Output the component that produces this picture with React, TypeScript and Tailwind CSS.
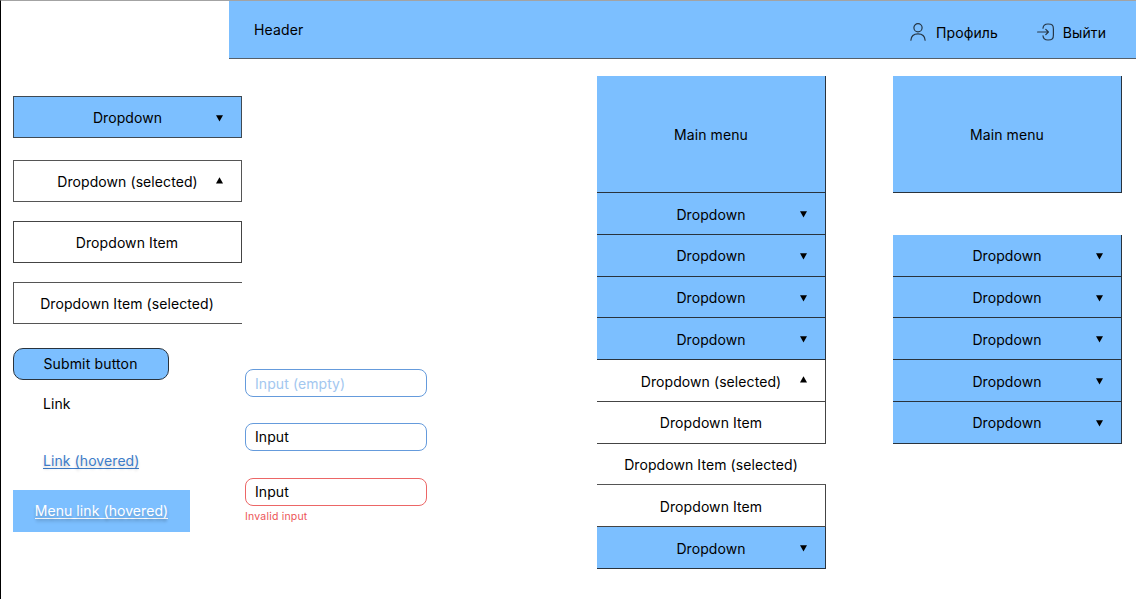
import React from "react";

function Arrow({ up = false }: { up?: boolean }) {
  return (
    <svg
      className={up ? "absolute right-[18px] top-[16px]" : "absolute right-[18px] top-[18px]"}
      width="7"
      height="7"
      viewBox="0 0 7 7"
    >
      {up ? <path d="M3.5 0.3 7 6.4H0Z" /> : <path d="M0 0.3H7L3.5 6.4Z" />}
    </svg>
  );
}

type RowProps = { label: string; arrow?: "up" | "down"; className?: string };

function Row({ label, arrow, className = "" }: RowProps) {
  return (
    <div className={`relative flex shrink-0 items-center justify-center ${className}`}>
      <span className="whitespace-nowrap">{label}</span>
      {arrow && <Arrow up={arrow === "up"} />}
    </div>
  );
}

const menuRow = "h-[41.77px] border-b border-r border-[#29333d] bg-[#7cbfff] pt-[1.5px]";
const plainRow = "h-[41.77px] border-b border-r border-[#444] pt-[1.5px]";
const gapRow = "h-[41.77px] border-b border-[#555] pr-px pt-[1.5px]";

function MainMenu() {
  return (
    <div className="flex h-[117px] items-center justify-center border-b border-r border-[#29333d] bg-[#7cbfff] pt-px">
      Main menu
    </div>
  );
}

function UserIcon() {
  return (
    <svg width="16" height="18" viewBox="0 0 16 18" fill="none" stroke="#263645" strokeWidth="1.2" strokeLinecap="round">
      <circle cx="8" cy="4.8" r="4.1" />
      <path d="M0.9 17.2C1.2 13.2 4.2 10.9 8 10.9s6.8 2.3 7.1 6.3" />
    </svg>
  );
}

function ExitIcon() {
  return (
    <svg width="18" height="18" viewBox="0 0 18 18" fill="none" stroke="#263645" strokeWidth="1.2" strokeLinecap="round" strokeLinejoin="round">
      <path d="M6 5.2C6.2 2 7.5 1 11 1c4.5 0 5.4 1.2 5.4 5v6c0 3.8-1 5-5.4 5-3.5 0-4.8-1-5-4.2" />
      <path d="M0.6 9h10.8M8.8 6.4 11.4 9l-2.6 2.6" />
    </svg>
  );
}

function Field({ text, className }: { text: string; className: string }) {
  return (
    <div className={`flex h-7 w-[182px] items-center rounded-[8px] border pl-[9px] ${className}`}>{text}</div>
  );
}

export default function App() {
  return (
    <div className="flex h-[599px] w-[1136px] flex-col overflow-hidden border-l border-t border-l-black border-t-[#a3a3a3] bg-white font-['Inter',sans-serif] text-[14px] leading-[17px] tracking-[0.08px] text-black">
      <header className="-mt-px ml-[228px] flex h-[59px] shrink-0 items-center justify-between border-b border-t border-b-[#555f69] border-t-[#648db5] bg-[#7cbfff] pl-[25px] pr-[30px]">
        <span className="tracking-[0.15px]">Header</span>
        <nav className="flex items-center pt-[5px]">
          <a className="flex items-center gap-[10px]">
            <UserIcon />
            Профиль
          </a>
          <a className="ml-[39px] flex items-center gap-[8px]">
            <ExitIcon />
            Выйти
          </a>
        </nav>
      </header>

      <main className="flex min-h-0 flex-1 items-start">
        <section className="ml-3 flex w-[229px] shrink-0 flex-col items-start pt-[37px]">
          <Row label="Dropdown" arrow="down" className="h-[42px] w-full border border-[#3f4a54] bg-[#7cbfff]" />
          <Row label="Dropdown (selected)" arrow="up" className="mt-[22px] h-[42px] w-full border border-[#555] pt-px" />
          <Row label="Dropdown Item" className="mt-[19px] h-[42px] w-full border border-[#444] pr-px" />
          <Row label="Dropdown Item (selected)" className="mt-[19px] h-[42px] w-full border-y border-l border-[#555] pr-[2px]" />
          <button className="mt-[24px] flex h-8 w-[156px] items-center justify-center rounded-[10px] border border-[#29333d] bg-[#7cbfff] pb-px pr-px tracking-[0.15px]">
            Submit button
          </button>
          <a className="ml-[30px] mt-[15px]">Link</a>
          <a className="ml-[30px] mt-[40px] h-[17px] border-b border-[#3d7cc9] leading-[17px] text-[#3d7cc9] [text-shadow:0_3px_3px_rgba(0,0,0,.18)]">
            Link (hovered)
          </a>
          <div className="mt-[21px] flex h-[42px] w-[177px] items-center justify-center bg-[#7cbfff] pb-px">
            <a className="h-[17px] border-b border-white leading-[17px] text-white [text-shadow:0_3px_3px_rgba(0,0,0,.2)] shadow-[0_4px_3px_-1px_rgba(0,0,0,.1)]">
              Menu link (hovered)
            </a>
          </div>
        </section>

        <section className="ml-[3px] w-[182px] shrink-0 pt-[310px]">
          <Field text="Input (empty)" className="border-[#659bdc] pt-px text-[#a3c7ef]" />
          <Field text="Input" className="mt-[26px] border-[#659bdc] pb-px" />
          <Field text="Input" className="mt-[27px] border-[#ec6666] pb-px" />
          <p className="mt-[4px] text-[10.5px] leading-[13px] tracking-[0.2px] text-[#ec5558]">Invalid input</p>
        </section>

        <section className="ml-[170px] flex w-[229px] shrink-0 flex-col pt-[17px]">
          <MainMenu />
          <Row label="Dropdown" arrow="down" className={menuRow} />
          <Row label="Dropdown" arrow="down" className={menuRow} />
          <Row label="Dropdown" arrow="down" className={menuRow} />
          <Row label="Dropdown" arrow="down" className={menuRow} />
          <Row label="Dropdown (selected)" arrow="up" className={plainRow} />
          <Row label="Dropdown Item" className={plainRow} />
          <Row label="Dropdown Item (selected)" className={gapRow} />
          <Row label="Dropdown Item" className={plainRow} />
          <Row label="Dropdown" arrow="down" className={menuRow} />
        </section>

        <section className="ml-[67px] flex w-[229px] shrink-0 flex-col pt-[17px]">
          <MainMenu />
          <div className="mt-[41.77px] flex flex-col">
            <Row label="Dropdown" arrow="down" className={menuRow} />
            <Row label="Dropdown" arrow="down" className={menuRow} />
            <Row label="Dropdown" arrow="down" className={menuRow} />
            <Row label="Dropdown" arrow="down" className={menuRow} />
            <Row label="Dropdown" arrow="down" className={menuRow} />
          </div>
        </section>
      </main>
    </div>
  );
}
